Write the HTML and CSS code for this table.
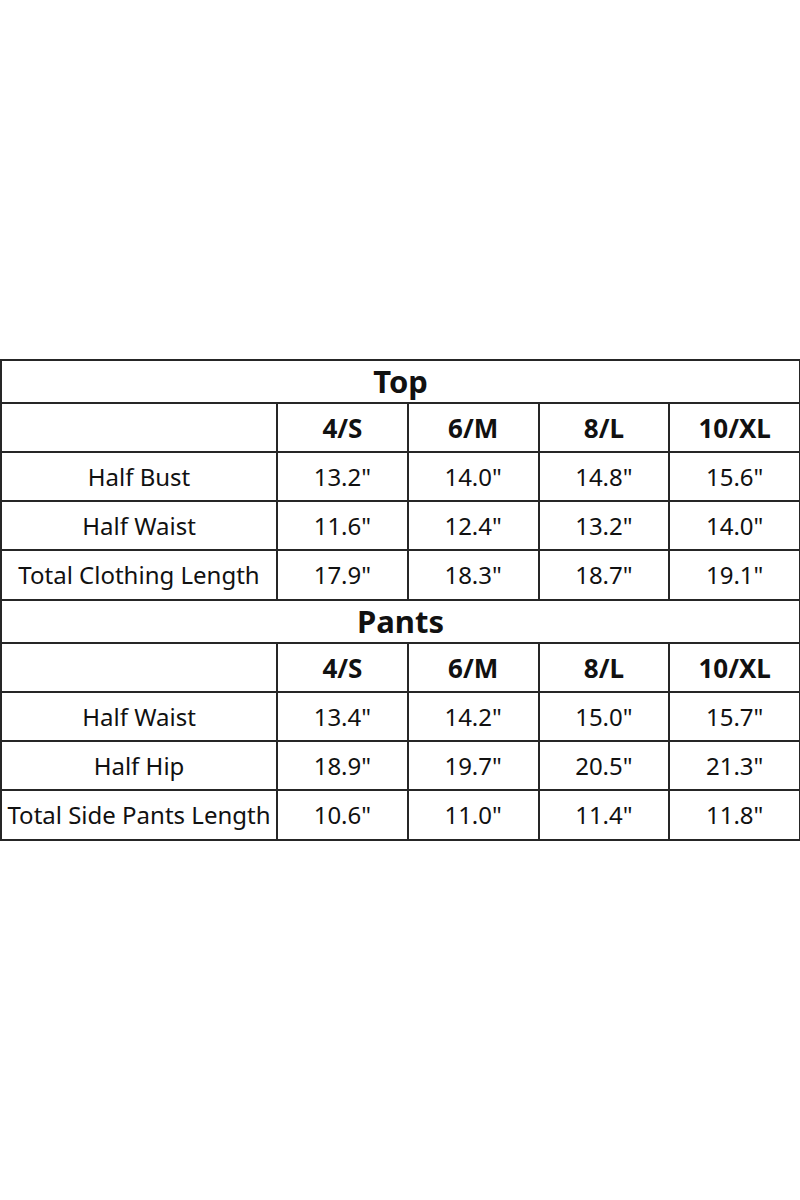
FILE: index.html
```html
<!DOCTYPE html>
<html>
<head>
<meta charset="utf-8">
<link rel="stylesheet" href="styles.css">
</head>
<body>
<div class="page">
<table class="chart">
  <colgroup>
    <col class="c-label"><col class="c-size"><col class="c-size"><col class="c-size"><col class="c-size">
  </colgroup>
  <tr class="title"><th colspan="5">Top</th></tr>
  <tr class="head"><th></th><th>4/S</th><th>6/M</th><th>8/L</th><th>10/XL</th></tr>
  <tr><td>Half Bust</td><td>13.2"</td><td>14.0"</td><td>14.8"</td><td>15.6"</td></tr>
  <tr><td>Half Waist</td><td>11.6"</td><td>12.4"</td><td>13.2"</td><td>14.0"</td></tr>
  <tr class="last"><td>Total Clothing Length</td><td>17.9"</td><td>18.3"</td><td>18.7"</td><td>19.1"</td></tr>
  <tr class="title"><th colspan="5">Pants</th></tr>
  <tr class="head"><th></th><th>4/S</th><th>6/M</th><th>8/L</th><th>10/XL</th></tr>
  <tr><td>Half Waist</td><td>13.4"</td><td>14.2"</td><td>15.0"</td><td>15.7"</td></tr>
  <tr><td>Half Hip</td><td>18.9"</td><td>19.7"</td><td>20.5"</td><td>21.3"</td></tr>
  <tr class="last"><td>Total Side Pants Length</td><td>10.6"</td><td>11.0"</td><td>11.4"</td><td>11.8"</td></tr>
</table>
</div>
</body>
</html>
```

FILE: styles.css
```css
html, body {
  margin: 0;
  padding: 0;
  background: #ffffff;
}
.page {
  padding-top: 359px;
}
.chart {
  border-collapse: collapse;
  width: 799px;
  table-layout: fixed;
  font-family: "Noto Sans", "Open Sans", sans-serif;
  color: #111;
}
.c-label { width: 276px; }
.c-size { width: 130.75px; }
.chart th, .chart td {
  border: 2px solid #262626;
  text-align: center;
  vertical-align: middle;
  padding: 0;
  white-space: nowrap;
  line-height: 1;
}
.chart td {
  font-size: 24px;
  font-weight: 400;
}
.chart tr { height: 49px; }
.chart tr.last { height: 50px; }
.chart tr.title { height: 43px; }
.chart tr.title th {
  font-size: 31px;
  font-weight: 700;
}
.chart tr.head th {
  font-size: 26px;
  font-weight: 700;
}
```
